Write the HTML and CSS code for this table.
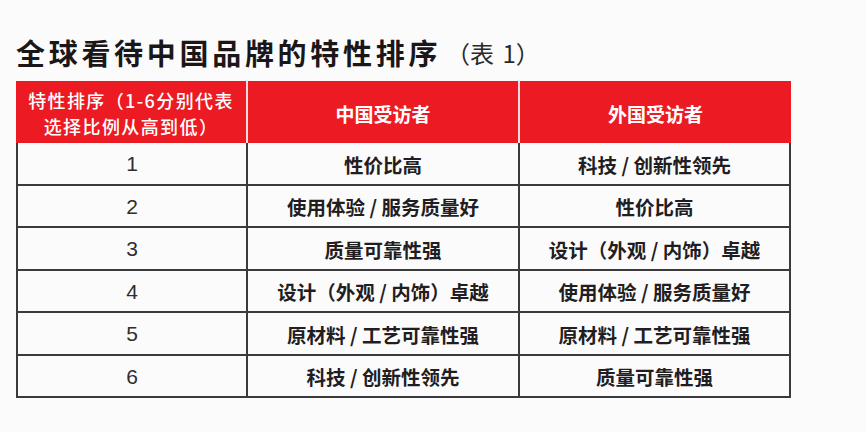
FILE: index.html
```html
<!DOCTYPE html>
<html lang="zh-CN">
<head>
<meta charset="utf-8">
<title>全球看待中国品牌的特性排序</title>
<link rel="stylesheet" href="styles.css">
</head>
<body>
<div class="page">
  <h1 class="title"><span class="title-main">全球看待中国品牌的特性排序</span><span class="title-note">（表 1）</span></h1>
  <div class="table">
    <div class="th th-rank"><span class="th-line">特性排序（1-6分别代表</span><span class="th-line">选择比例从高到低）</span></div>
    <div class="th">中国受访者</div>
    <div class="th th-last">外国受访者</div>

    <div class="td td-rank">1</div>
    <div class="td">性价比高</div>
    <div class="td">科技 / 创新性领先</div>

    <div class="td td-rank">2</div>
    <div class="td">使用体验 / 服务质量好</div>
    <div class="td">性价比高</div>

    <div class="td td-rank">3</div>
    <div class="td">质量可靠性强</div>
    <div class="td">设计（外观 / 内饰）卓越</div>

    <div class="td td-rank">4</div>
    <div class="td">设计（外观 / 内饰）卓越</div>
    <div class="td">使用体验 / 服务质量好</div>

    <div class="td td-rank">5</div>
    <div class="td">原材料 / 工艺可靠性强</div>
    <div class="td">原材料 / 工艺可靠性强</div>

    <div class="td td-rank">6</div>
    <div class="td">科技 / 创新性领先</div>
    <div class="td">质量可靠性强</div>
  </div>
</div>
</body>
</html>
```

FILE: styles.css
```css
html, body {
  margin: 0;
  padding: 0;
  background: #fcfbfc;
}

.page {
  width: 866px;
  height: 432px;
  padding: 32px 0 0 16px;
  box-sizing: border-box;
  font-family: "Noto Sans CJK SC", "Liberation Sans", sans-serif;
}

.title {
  margin: 0;
  height: 40px;
  display: flex;
  align-items: center;
  font-weight: 700;
}

.title-main {
  font-size: 29px;
  letter-spacing: 3.7px;
  color: #1b1718;
  line-height: 40px;
}

.title-note {
  font-size: 24px;
  font-weight: 400;
  color: #2a2a2a;
  margin-left: 5px;
  line-height: 40px;
  padding-top: 2px;
  word-spacing: 3px;
}

.table {
  margin-top: 9px;
  width: 775px;
  display: grid;
  grid-template-columns: 232px 272px 271px;
  grid-auto-rows: 42.5px;
  grid-template-rows: 62px;
}

.th {
  background: #ec1b23;
  color: #ffffff;
  font-weight: 700;
  font-size: 19px;
  display: flex;
  align-items: center;
  justify-content: center;
  text-align: center;
  border-right: 2px solid #f4dada;
  box-sizing: border-box;
  padding-top: 2px;
}

.th-rank {
  flex-direction: column;
  font-size: 18px;
  font-weight: 500;
  letter-spacing: 1.4px;
  padding-top: 2px;
}

.th-line {
  display: block;
  height: 26px;
  line-height: 26px;
  white-space: nowrap;
}

.th-last {
  border-right: none;
}

.td {
  box-sizing: border-box;
  border-right: 2px solid #3a3a3c;
  border-bottom: 2px solid #3a3a3c;
  display: flex;
  align-items: center;
  justify-content: center;
  font-size: 19.5px;
  font-weight: 700;
  color: #221e1f;
  white-space: nowrap;
  padding-top: 2px;
}

.td-rank {
  border-left: 2px solid #3a3a3c;
  font-family: "Liberation Sans", Arial, sans-serif;
  font-weight: 400;
  font-size: 21px;
  color: #2e2e2e;
}
```
